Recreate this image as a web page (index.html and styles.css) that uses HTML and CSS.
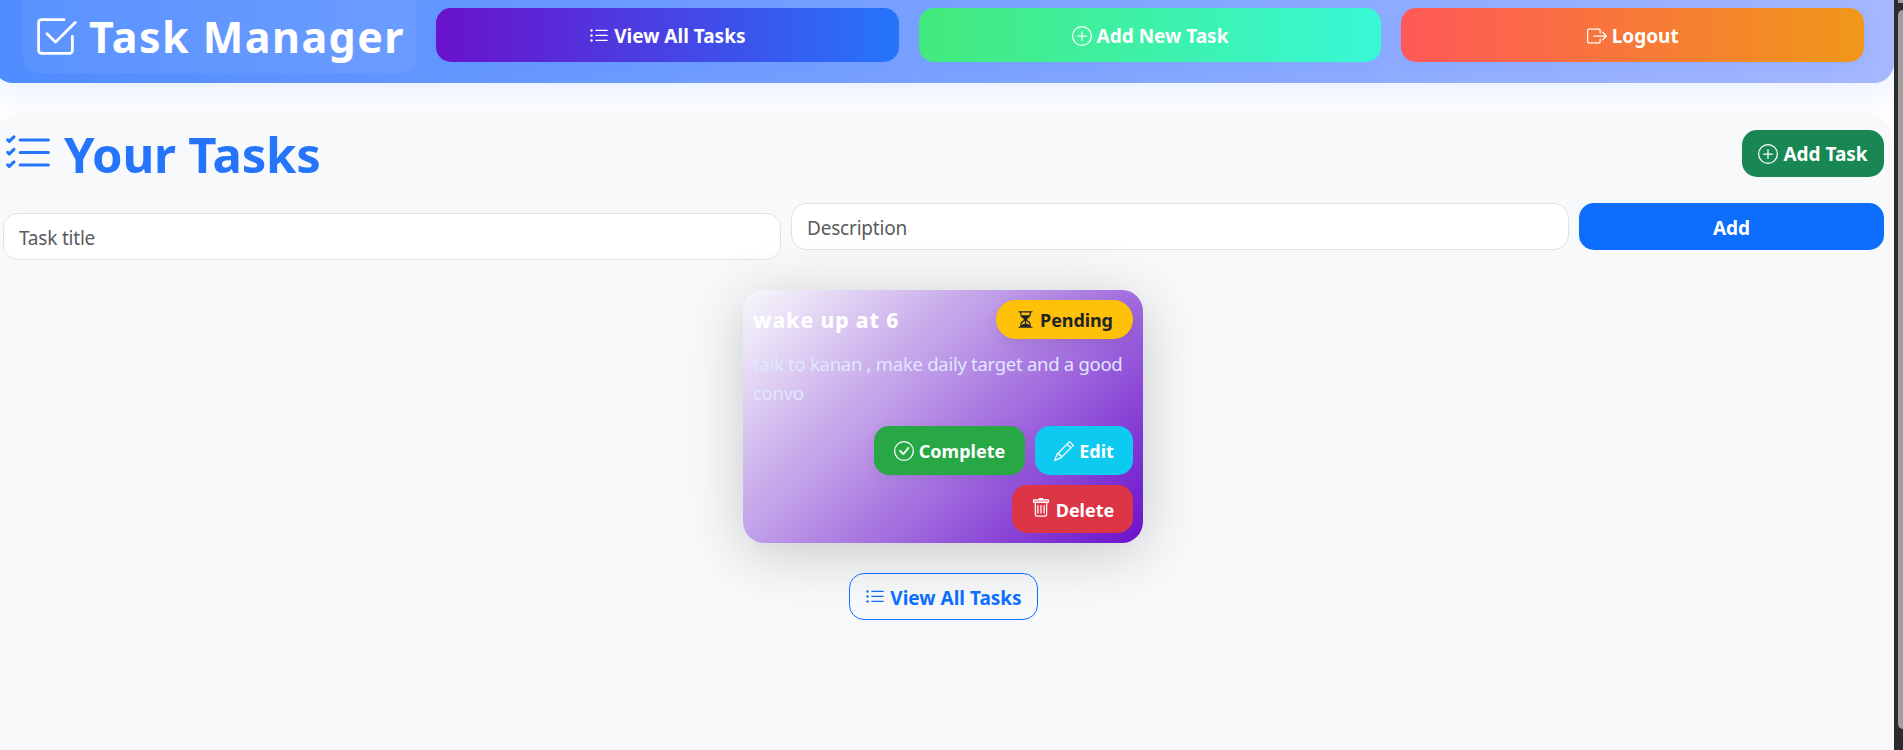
FILE: index.html
```html
<!DOCTYPE html>
<html lang="en">
<head>
<meta charset="utf-8">
<title>Task Manager</title>
<link rel="stylesheet" href="styles.css">
</head>
<body>
<svg class="sprite" aria-hidden="true">
  <symbol id="list-ul" viewBox="0 0 16 16"><path fill-rule="evenodd" d="M5 11.5a.5.5 0 0 1 .5-.5h9a.5.5 0 0 1 0 1h-9a.5.5 0 0 1-.5-.5m0-4a.5.5 0 0 1 .5-.5h9a.5.5 0 0 1 0 1h-9a.5.5 0 0 1-.5-.5m0-4a.5.5 0 0 1 .5-.5h9a.5.5 0 0 1 0 1h-9a.5.5 0 0 1-.5-.5m-3 1a1 1 0 1 0 0-2 1 1 0 0 0 0 2m0 4a1 1 0 1 0 0-2 1 1 0 0 0 0 2m0 4a1 1 0 1 0 0-2 1 1 0 0 0 0 2"/></symbol>
  <symbol id="list-check" viewBox="0 0 16 16"><path fill-rule="evenodd" d="M5 11.5a.5.5 0 0 1 .5-.5h9a.5.5 0 0 1 0 1h-9a.5.5 0 0 1-.5-.5m0-4a.5.5 0 0 1 .5-.5h9a.5.5 0 0 1 0 1h-9a.5.5 0 0 1-.5-.5m0-4a.5.5 0 0 1 .5-.5h9a.5.5 0 0 1 0 1h-9a.5.5 0 0 1-.5-.5M3.854 2.146a.5.5 0 0 1 0 .708l-1.5 1.5a.5.5 0 0 1-.708 0l-.5-.5a.5.5 0 1 1 .708-.708L2 3.293l1.146-1.147a.5.5 0 0 1 .708 0m0 4a.5.5 0 0 1 0 .708l-1.5 1.5a.5.5 0 0 1-.708 0l-.5-.5a.5.5 0 1 1 .708-.708L2 7.293l1.146-1.147a.5.5 0 0 1 .708 0m0 4a.5.5 0 0 1 0 .708l-1.5 1.5a.5.5 0 0 1-.708 0l-.5-.5a.5.5 0 0 1 .708-.708l.146.147 1.146-1.147a.5.5 0 0 1 .708 0"/></symbol>
  <symbol id="check-square" viewBox="0 0 16 16"><path d="M3 14.5A1.5 1.5 0 0 1 1.5 13V3A1.5 1.5 0 0 1 3 1.5h8a.5.5 0 0 1 0 1H3a.5.5 0 0 0-.5.5v10a.5.5 0 0 0 .5.5h10a.5.5 0 0 0 .5-.5V8a.5.5 0 0 1 1 0v5a1.5 1.5 0 0 1-1.5 1.5z"/><path d="m8.354 10.354 7-7a.5.5 0 0 0-.708-.708L8 9.293 5.354 6.646a.5.5 0 1 0-.708.708l3 3a.5.5 0 0 0 .708 0"/></symbol>
  <symbol id="plus-circle" viewBox="0 0 16 16"><path d="M8 15A7 7 0 1 1 8 1a7 7 0 0 1 0 14m0 1A8 8 0 1 0 8 0a8 8 0 0 0 0 16"/><path d="M8 4a.5.5 0 0 1 .5.5v3h3a.5.5 0 0 1 0 1h-3v3a.5.5 0 0 1-1 0v-3h-3a.5.5 0 0 1 0-1h3v-3A.5.5 0 0 1 8 4"/></symbol>
  <symbol id="check-circle" viewBox="0 0 16 16"><path d="M8 15A7 7 0 1 1 8 1a7 7 0 0 1 0 14m0 1A8 8 0 1 0 8 0a8 8 0 0 0 0 16"/><path d="m10.97 4.97-.02.022-3.473 4.425-2.093-2.094a.75.75 0 0 0-1.06 1.06L6.97 11.03a.75.75 0 0 0 1.079-.02l3.992-4.99a.75.75 0 0 0-1.071-1.05"/></symbol>
  <symbol id="logout" viewBox="0 0 16 16"><path d="M10 12.5a.5.5 0 0 1-.5.5h-8a.5.5 0 0 1-.5-.5v-9a.5.5 0 0 1 .5-.5h8a.5.5 0 0 1 .5.5v2a.5.5 0 0 0 1 0v-2A1.5 1.5 0 0 0 9.5 2h-8A1.5 1.5 0 0 0 0 3.5v9A1.5 1.5 0 0 0 1.5 14h8a1.5 1.5 0 0 0 1.5-1.5v-2a.5.5 0 0 0-1 0z"/><path d="M15.854 8.354a.5.5 0 0 0 0-.708l-3-3a.5.5 0 0 0-.708.708L14.293 7.5H5.5a.5.5 0 0 0 0 1h8.793l-2.147 2.146a.5.5 0 0 0 .708.708z"/></symbol>
  <symbol id="hourglass" viewBox="0 0 16 16"><path d="M2.5 15a.5.5 0 1 1 0-1h1v-1a4.5 4.5 0 0 1 2.557-4.06c.29-.139.443-.377.443-.59v-.7c0-.213-.154-.451-.443-.59A4.5 4.5 0 0 1 3.5 3V2h-1a.5.5 0 0 1 0-1h11a.5.5 0 0 1 0 1h-1v1a4.5 4.5 0 0 1-2.557 4.06c-.29.139-.443.377-.443.59v.7c0 .213.154.451.443.59A4.5 4.5 0 0 1 12.5 13v1h1a.5.5 0 0 1 0 1zm2-13v1c0 .537.12 1.045.337 1.5h6.326c.216-.455.337-.963.337-1.5V2zm3 6.35c0 .701-.478 1.236-1.011 1.492A3.5 3.5 0 0 0 4.5 13s.866-1.299 3-1.48zm1 0v3.17c2.134.181 3 1.48 3 1.48a3.5 3.5 0 0 0-1.989-3.158C8.978 9.586 8.5 9.052 8.5 8.351z"/></symbol>
  <symbol id="pencil" viewBox="0 0 16 16"><path d="M12.146.146a.5.5 0 0 1 .708 0l3 3a.5.5 0 0 1 0 .708l-10 10a.5.5 0 0 1-.168.11l-5 2a.5.5 0 0 1-.65-.65l2-5a.5.5 0 0 1 .11-.168zM11.207 2.5 13.5 4.793 14.793 3.5 12.5 1.207zm1.586 3L10.5 3.207 4 9.707V10h.5a.5.5 0 0 1 .5.5v.5h.5a.5.5 0 0 1 .5.5v.5h.293zm-9.761 5.175-.106.106-1.528 3.821 3.821-1.528.106-.106A.5.5 0 0 1 5 12.5V12h-.5a.5.5 0 0 1-.5-.5V11h-.5a.5.5 0 0 1-.468-.325"/></symbol>
  <symbol id="trash" viewBox="0 0 16 16"><path d="M5.5 5.5A.5.5 0 0 1 6 6v6a.5.5 0 0 1-1 0V6a.5.5 0 0 1 .5-.5m2.5 0a.5.5 0 0 1 .5.5v6a.5.5 0 0 1-1 0V6a.5.5 0 0 1 .5-.5m3 .5a.5.5 0 0 0-1 0v6a.5.5 0 0 0 1 0z"/><path d="M14.5 3a1 1 0 0 1-1 1H13v9a2 2 0 0 1-2 2H5a2 2 0 0 1-2-2V4h-.5a1 1 0 0 1-1-1V2a1 1 0 0 1 1-1H6a1 1 0 0 1 1-1h2a1 1 0 0 1 1 1h3.5a1 1 0 0 1 1 1zM4.118 4 4 4.059V13a1 1 0 0 0 1 1h6a1 1 0 0 0 1-1V4.059L11.882 4zM2.5 3h11V2h-11z"/><path class="lid" d="M2.5 3h11V2h-11z"/></symbol>
</svg>
<div class="window">
  <div class="page">
    <nav class="navbar">
      <a class="brand"><svg class="icon"><use href="#check-square"/></svg><span>Task Manager</span></a>
      <div class="nav-links">
        <a class="nav-btn nav-view"><svg class="icon"><use href="#list-ul"/></svg><span>View All Tasks</span></a>
        <a class="nav-btn nav-add"><svg class="icon"><use href="#plus-circle"/></svg><span>Add New Task</span></a>
        <a class="nav-btn nav-logout"><svg class="icon"><use href="#logout"/></svg><span>Logout</span></a>
      </div>
    </nav>
    <main class="tasks">
      <header class="tasks-head">
        <h1 class="heading"><svg class="icon"><use href="#list-check"/></svg><span>Your Tasks</span></h1>
        <button class="btn add-task"><svg class="icon"><use href="#plus-circle"/></svg><span>Add Task</span></button>
      </header>
      <form class="task-form">
        <input class="field field-title" type="text" placeholder="Task title">
        <input class="field field-desc" type="text" placeholder="Description">
        <button class="btn submit" type="button">Add</button>
      </form>
      <article class="card">
        <div class="card-head">
          <h2 class="card-title">wake up at 6</h2>
          <span class="badge"><svg class="icon"><use href="#hourglass"/></svg><span>Pending</span></span>
        </div>
        <p class="card-text">talk to kanan , make daily target and a good convo</p>
        <div class="actions">
          <button class="btn action complete"><svg class="icon"><use href="#check-circle"/></svg><span>Complete</span></button>
          <button class="btn action edit"><svg class="icon"><use href="#pencil"/></svg><span>Edit</span></button>
          <button class="btn action delete"><svg class="icon"><use href="#trash"/></svg><span>Delete</span></button>
        </div>
      </article>
      <a class="btn view-all"><svg class="icon"><use href="#list-ul"/></svg><span>View All Tasks</span></a>
    </main>
  </div>
  <div class="scrollbar"><div class="thumb thumb-top"></div><div class="thumb thumb-main"></div></div>
</div>
</body>
</html>
```
FILE: styles.css
```css
* { box-sizing: border-box; }
body {
  margin: 0;
  background: #fff;
  font-family: "Noto Sans", "Open Sans", sans-serif;
  font-size: 19px;
  color: #212529;
}
.sprite { display: none; }
.icon { width: 20px; height: 20px; fill: currentColor; flex: none; display: block; }
.lid { opacity: .6; }
.window { display: flex; height: 750px; overflow: hidden; }
.page { flex: 1; display: flex; flex-direction: column; overflow: hidden; }

.navbar {
  flex: none;
  display: flex;
  height: 83px;
  margin-left: -7px;
  padding: 0 30px 0 30px;
  gap: 20px;
  border-radius: 0 0 20px 20px;
  background: linear-gradient(90deg, #4f8cff, #a6b8ff);
  box-shadow: 0 10px 40px rgba(79, 140, 255, .15);
}
.brand {
  display: flex;
  width: 393px;
  height: 73px;
  padding: 0 0 0 13px;
  gap: 11px;
  border-radius: 0 0 15px 15px;
  background: rgba(255, 255, 255, .06);
  color: #fff;
  font-size: 43px;
  line-height: 74px;
  font-weight: 700;
  letter-spacing: 1.45px;
  white-space: nowrap;
}
.brand .icon { width: 45px; height: 45px; margin-top: 14px; margin-left: -3px; }
.nav-links { flex: 1; display: grid; grid-template-columns: repeat(3, 1fr); gap: 20px; padding-top: 8px; }
.nav-btn {
  display: flex;
  align-items: center;
  justify-content: center;
  gap: 5px;
  height: 54px;
  padding-top: 2px;
  border-radius: 15px;
  color: #fff;
  font-weight: 700;
  box-shadow: 0 4px 15px rgba(79, 140, 255, .15);
}
.nav-btn .icon { margin-top: -1px; }
.nav-view { background: linear-gradient(90deg, #6a11cb, #2575fc); }
.nav-add { background: linear-gradient(90deg, #43e97b, #38f9d7); }
.nav-logout { background: linear-gradient(90deg, #ff5858, #f09819); }

.tasks {
  flex: 1;
  display: flex;
  flex-direction: column;
  align-items: center;
  margin: 30px 0 0 -7px;
  padding: 17px 10px 0 10px;
  border-radius: 30px 30px 0 0;
  background: #f8f9fb;
}
.tasks-head { width: 100%; display: flex; justify-content: space-between; height: 73px; }
.heading {
  display: flex;
  gap: 11px;
  margin: 0;
  color: #2575fc;
  font-size: 49px;
  line-height: 49px;
  letter-spacing: -.2px;
  white-space: nowrap;
}
.heading .icon { width: 50px; height: 50px; margin-top: -1px; }
.btn {
  display: flex;
  align-items: center;
  justify-content: center;
  gap: 5px;
  height: 47px;
  padding: 2px 0 0;
  border: 0;
  border-radius: 15px;
  color: #fff;
  font: inherit;
  font-weight: 700;
  white-space: nowrap;
}
.btn .icon { margin-top: -1px; }
.add-task { width: 142px; padding-top: 1px; background: #198754; }
.task-form {
  width: 100%;
  display: grid;
  grid-template-columns: 778px 778px 1fr;
  gap: 10px;
  align-items: start;
}
.field {
  height: 47px;
  padding: 2px 15px 0;
  border: 1px solid #dee2e6;
  border-radius: 15px;
  background: #fff;
  font: inherit;
  letter-spacing: -.2px;
}
.field::placeholder { color: #595c5f; opacity: 1; }
.field-title { margin-top: 10px; }
.submit { background: #0d6efd; }

.card {
  width: 400px;
  height: 253px;
  margin: 30px 1px 30px 0;
  padding: 10px;
  border-radius: 21px;
  background: linear-gradient(135deg, #f8f9fb 0%, #6a11cb 100%);
  box-shadow: 0 10px 60px rgba(0, 0, 0, .2);
}
.card-head { display: flex; justify-content: space-between; }
.card-title {
  margin: 0;
  color: #fff;
  font-size: 21px;
  font-weight: 800;
  line-height: 40px;
  letter-spacing: .9px;
}
.badge {
  display: flex;
  align-items: center;
  justify-content: center;
  gap: 5px;
  width: 137px;
  height: 39px;
  border-radius: 20px;
  background: #ffc107;
  font-size: 18px;
  font-weight: 700;
  letter-spacing: -.1px;
  box-shadow: 0 4px 12px rgba(0, 0, 0, .08);
}
.badge .icon { width: 19px; height: 19px; margin-top: -1px; }
.card-text {
  margin: 9px -10px 19px 0;
  color: #e0e7ff;
  font-size: 18.5px;
  line-height: 29px;
  letter-spacing: -.28px;
}
.actions { display: flex; flex-wrap: wrap; justify-content: flex-end; gap: 10px; }
.action { height: 49px; font-size: 18px; padding-top: 1px; }
.complete { width: 151px; background: #28a745; box-shadow: 0 4px 12px rgba(0, 0, 0, .05); }
.edit { width: 98px; background: #0dcaf0; }
.delete { width: 121px; height: 48px; background: #dc3545; }
.delete .icon { margin-top: -3px; }
.view-all { width: 189px; border: 1px solid #0d6efd; color: #0d6efd; }
.view-all .icon { margin-top: -2px; }

.scrollbar { width: 9px; padding-left: 4px; background: #2c2c2c; }
.thumb { width: 5px; background: #9f9f9f; }
.thumb-top { height: 3px; }
.thumb-main { height: 719px; margin-top: 7px; border-radius: 5px 0 0 5px; }
```
